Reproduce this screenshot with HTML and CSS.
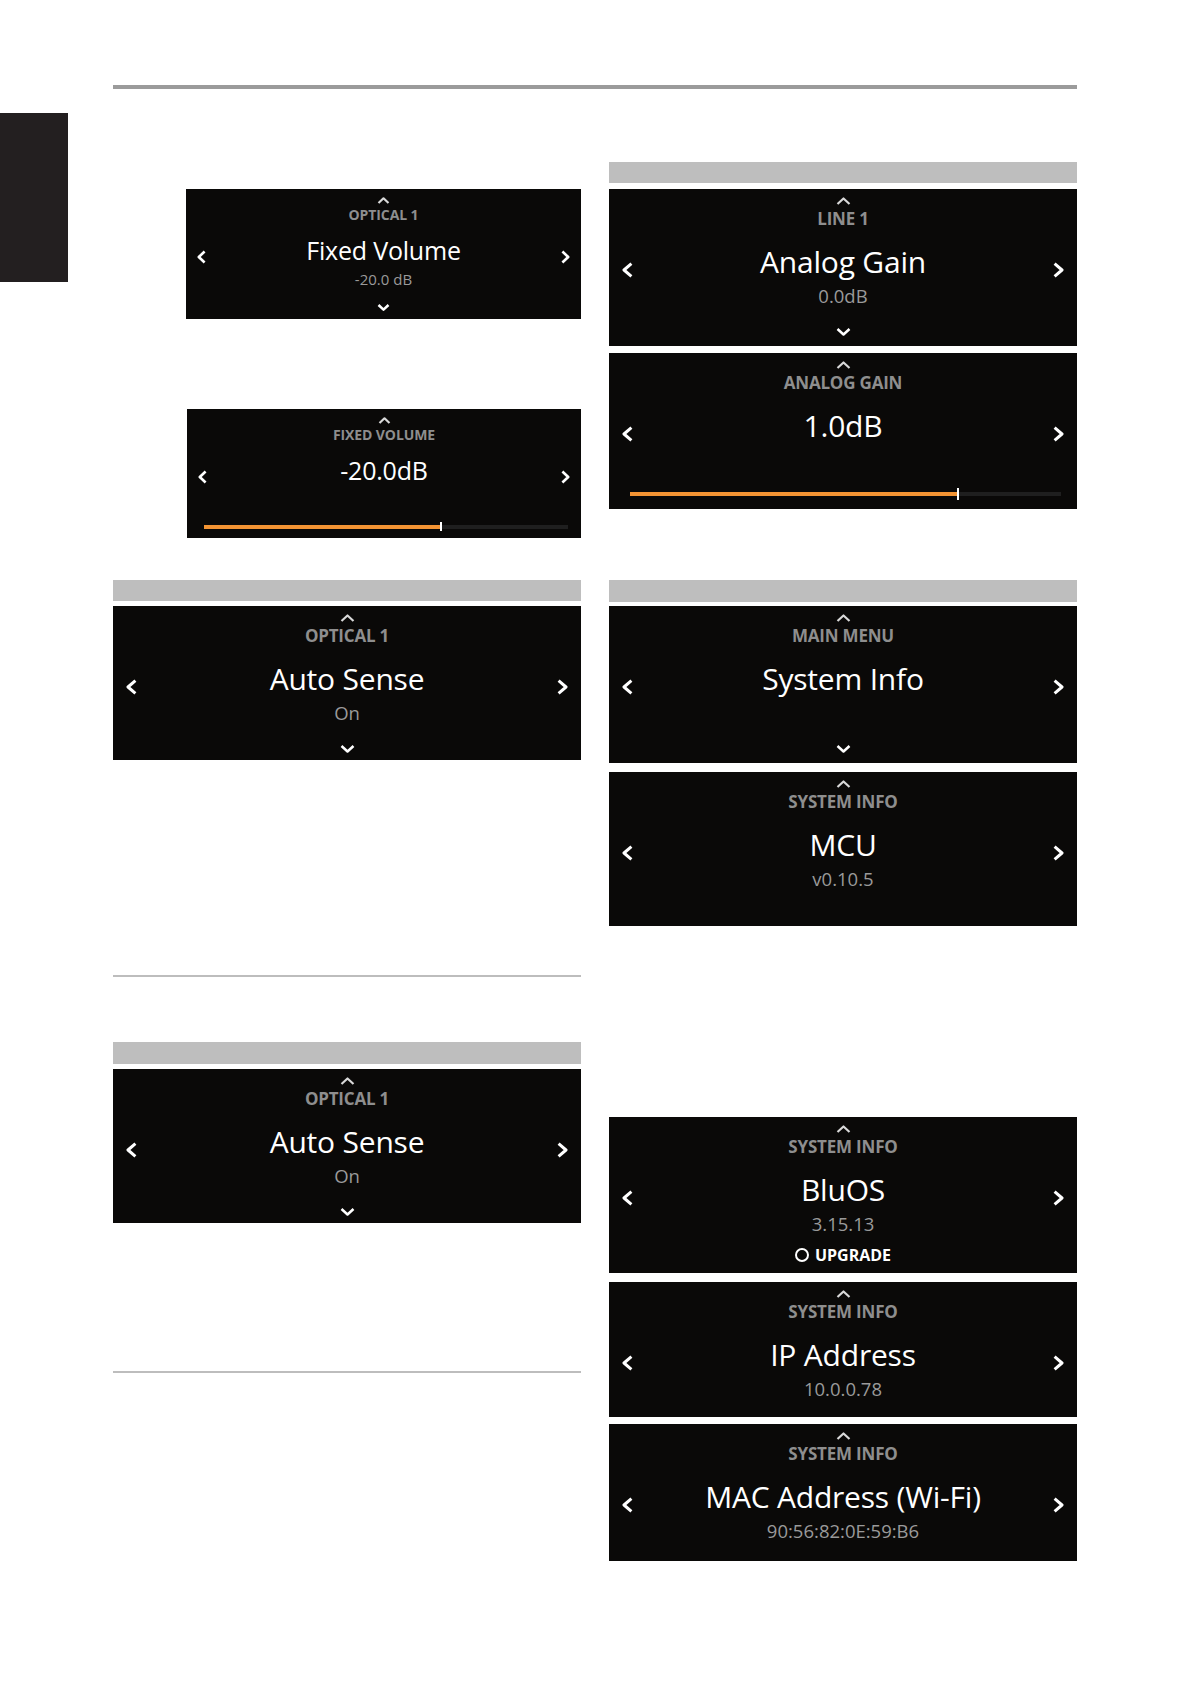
FILE: index.html
```html
<!DOCTYPE html>
<html lang="en">
<head>
<meta charset="utf-8">
<title>Settings screens</title>
<link rel="stylesheet" href="styles.css">
</head>
<body>
<div class="sheet">
  <aside class="gutter"><div class="tab"></div></aside>
  <main class="main">
    <div class="top-rule"></div>
    <div class="cols">
      <section class="col">
        <!-- Fixed Volume -->
        <div class="panel sm pa mt-100">
          <svg class="up" viewBox="0 0 13 7"><polyline points="1.5,6 6.5,1.3 11.5,6"/></svg>
          <div class="label">OPTICAL 1</div>
          <div class="row">
            <svg class="arr" viewBox="0 0 9 14"><polyline points="7.6,1.5 1.8,7 7.6,12.5"/></svg>
            <div class="title">Fixed Volume</div>
            <svg class="arr" viewBox="0 0 9 14"><polyline points="1.4,1.5 7.2,7 1.4,12.5"/></svg>
          </div>
          <div class="sub">-20.0 dB</div>
          <svg class="down" viewBox="0 0 13 7"><polyline points="1.5,1 6.5,5.7 11.5,1"/></svg>
        </div>

        <div class="panel sm pb mt-90">
          <svg class="up" viewBox="0 0 13 7"><polyline points="1.5,6 6.5,1.3 11.5,6"/></svg>
          <div class="label">FIXED VOLUME</div>
          <div class="row">
            <svg class="arr" viewBox="0 0 9 14"><polyline points="7.6,1.5 1.8,7 7.6,12.5"/></svg>
            <div class="title">-20.0dB</div>
            <svg class="arr" viewBox="0 0 9 14"><polyline points="1.4,1.5 7.2,7 1.4,12.5"/></svg>
          </div>
          <div class="slider">
            <div class="track"></div>
            <div class="fill" style="width:65%"></div>
            <div class="tick"></div>
          </div>
        </div>

        <div class="bar mt-42"></div>
        <div class="panel h154 mt-5">
          <svg class="up" viewBox="0 0 15 8"><polyline points="1.5,7 7.5,1.5 13.5,7"/></svg>
          <div class="label">OPTICAL 1</div>
          <div class="row">
            <svg class="arr" viewBox="0 0 11 16"><polyline points="9.4,1.6 2,8 9.4,14.4"/></svg>
            <div class="title">Auto Sense</div>
            <svg class="arr" viewBox="0 0 11 16"><polyline points="1.6,1.6 9,8 1.6,14.4"/></svg>
          </div>
          <div class="sub">On</div>
          <svg class="down" viewBox="0 0 15 8"><polyline points="1.5,1 7.5,6.5 13.5,1"/></svg>
        </div>

        <div class="rule mt-215"></div>

        <div class="bar tall mt-65"></div>
        <div class="panel h154 mt-5">
          <svg class="up" viewBox="0 0 15 8"><polyline points="1.5,7 7.5,1.5 13.5,7"/></svg>
          <div class="label">OPTICAL 1</div>
          <div class="row">
            <svg class="arr" viewBox="0 0 11 16"><polyline points="9.4,1.6 2,8 9.4,14.4"/></svg>
            <div class="title">Auto Sense</div>
            <svg class="arr" viewBox="0 0 11 16"><polyline points="1.6,1.6 9,8 1.6,14.4"/></svg>
          </div>
          <div class="sub">On</div>
          <svg class="down" viewBox="0 0 15 8"><polyline points="1.5,1 7.5,6.5 13.5,1"/></svg>
        </div>

        <div class="rule mt-148"></div>
      </section>

      <section class="col">
        <div class="bar mt-73"></div>
        <div class="panel h157 mt-6">
          <svg class="up" viewBox="0 0 15 8"><polyline points="1.5,7 7.5,1.5 13.5,7"/></svg>
          <div class="label">LINE 1</div>
          <div class="row">
            <svg class="arr" viewBox="0 0 11 16"><polyline points="9.4,1.6 2,8 9.4,14.4"/></svg>
            <div class="title">Analog Gain</div>
            <svg class="arr" viewBox="0 0 11 16"><polyline points="1.6,1.6 9,8 1.6,14.4"/></svg>
          </div>
          <div class="sub">0.0dB</div>
          <svg class="down" viewBox="0 0 15 8"><polyline points="1.5,1 7.5,6.5 13.5,1"/></svg>
        </div>

        <div class="panel h156 mt-7">
          <svg class="up" viewBox="0 0 15 8"><polyline points="1.5,7 7.5,1.5 13.5,7"/></svg>
          <div class="label">ANALOG GAIN</div>
          <div class="row">
            <svg class="arr" viewBox="0 0 11 16"><polyline points="9.4,1.6 2,8 9.4,14.4"/></svg>
            <div class="title">1.0dB</div>
            <svg class="arr" viewBox="0 0 11 16"><polyline points="1.6,1.6 9,8 1.6,14.4"/></svg>
          </div>
          <div class="slider">
            <div class="track"></div>
            <div class="fill" style="width:76%"></div>
            <div class="tick"></div>
          </div>
        </div>

        <div class="bar tall mt-71"></div>
        <div class="panel h157 mt-4">
          <svg class="up" viewBox="0 0 15 8"><polyline points="1.5,7 7.5,1.5 13.5,7"/></svg>
          <div class="label">MAIN MENU</div>
          <div class="row">
            <svg class="arr" viewBox="0 0 11 16"><polyline points="9.4,1.6 2,8 9.4,14.4"/></svg>
            <div class="title">System Info</div>
            <svg class="arr" viewBox="0 0 11 16"><polyline points="1.6,1.6 9,8 1.6,14.4"/></svg>
          </div>
          <div class="sub empty"></div>
          <svg class="down" viewBox="0 0 15 8"><polyline points="1.5,1 7.5,6.5 13.5,1"/></svg>
        </div>

        <div class="panel h154 mt-9">
          <svg class="up" viewBox="0 0 15 8"><polyline points="1.5,7 7.5,1.5 13.5,7"/></svg>
          <div class="label">SYSTEM INFO</div>
          <div class="row">
            <svg class="arr" viewBox="0 0 11 16"><polyline points="9.4,1.6 2,8 9.4,14.4"/></svg>
            <div class="title">MCU</div>
            <svg class="arr" viewBox="0 0 11 16"><polyline points="1.6,1.6 9,8 1.6,14.4"/></svg>
          </div>
          <div class="sub">v0.10.5</div>
        </div>

        <div class="panel h156 mt-191">
          <svg class="up" viewBox="0 0 15 8"><polyline points="1.5,7 7.5,1.5 13.5,7"/></svg>
          <div class="label">SYSTEM INFO</div>
          <div class="row">
            <svg class="arr" viewBox="0 0 11 16"><polyline points="9.4,1.6 2,8 9.4,14.4"/></svg>
            <div class="title">BluOS</div>
            <svg class="arr" viewBox="0 0 11 16"><polyline points="1.6,1.6 9,8 1.6,14.4"/></svg>
          </div>
          <div class="sub">3.15.13</div>
          <div class="upgrade"><span class="ring"></span>UPGRADE</div>
        </div>

        <div class="panel h135 mt-9">
          <svg class="up" viewBox="0 0 15 8"><polyline points="1.5,7 7.5,1.5 13.5,7"/></svg>
          <div class="label">SYSTEM INFO</div>
          <div class="row">
            <svg class="arr" viewBox="0 0 11 16"><polyline points="9.4,1.6 2,8 9.4,14.4"/></svg>
            <div class="title">IP Address</div>
            <svg class="arr" viewBox="0 0 11 16"><polyline points="1.6,1.6 9,8 1.6,14.4"/></svg>
          </div>
          <div class="sub">10.0.0.78</div>
        </div>

        <div class="panel h137 mt-7">
          <svg class="up" viewBox="0 0 15 8"><polyline points="1.5,7 7.5,1.5 13.5,7"/></svg>
          <div class="label">SYSTEM INFO</div>
          <div class="row">
            <svg class="arr" viewBox="0 0 11 16"><polyline points="9.4,1.6 2,8 9.4,14.4"/></svg>
            <div class="title">MAC Address (Wi-Fi)</div>
            <svg class="arr" viewBox="0 0 11 16"><polyline points="1.6,1.6 9,8 1.6,14.4"/></svg>
          </div>
          <div class="sub">90:56:82:0E:59:B6</div>
        </div>
      </section>
    </div>
  </main>
</div>
</body>
</html>
```

FILE: styles.css
```css
* { box-sizing: border-box; }

html, body {
  margin: 0;
  padding: 0;
  background: #ffffff;
}

body {
  font-family: "Open Sans", "Noto Sans", "DejaVu Sans", sans-serif;
  width: 1191px;
  min-height: 1684px;
}

.sheet {
  display: flex;
  align-items: flex-start;
}

.gutter {
  flex: 0 0 113px;
}

.tab {
  width: 68px;
  height: 169px;
  margin-top: 113px;
  background: #231f20;
}

.main {
  width: 964px;
  padding-top: 85px;
}

.top-rule {
  height: 4px;
  background: #9b9b9b;
}

.cols {
  display: flex;
  gap: 28px;
  align-items: flex-start;
}

.col {
  width: 468px;
  display: flex;
  flex-direction: column;
}

/* spacing */
.mt-4 { margin-top: 4px; }
.mt-5 { margin-top: 5px; }
.mt-6 { margin-top: 6px; }
.mt-7 { margin-top: 7px; }
.mt-9 { margin-top: 9px; }
.mt-42 { margin-top: 42px; }
.mt-65 { margin-top: 65px; }
.mt-71 { margin-top: 71px; }
.mt-73 { margin-top: 73px; }
.mt-90 { margin-top: 90px; }
.mt-100 { margin-top: 100px; }
.mt-148 { margin-top: 148px; }
.mt-191 { margin-top: 191px; }
.mt-215 { margin-top: 215px; }

.bar {
  height: 21px;
  background: #bebebe;
}
.bar.tall { height: 22px; }

.rule {
  height: 2px;
  background: #bdbdbd;
}

/* display panel */
.panel {
  background: #0a0908;
  display: flex;
  flex-direction: column;
  align-items: center;
  color: #fff;
}
.h135 { height: 135px; }
.h137 { height: 137px; }
.h154 { height: 154px; }
.h156 { height: 156px; }
.h157 { height: 157px; }

.panel svg polyline {
  fill: none;
  stroke-linejoin: round;
}

.up {
  width: 15px;
  height: 8px;
  margin-top: 8px;
}
.up polyline { stroke: #d9d9d9; stroke-width: 2.2; }

.down {
  width: 15px;
  height: 8px;
  margin-top: 20px;
}
.down polyline { stroke: #ffffff; stroke-width: 2.5; }

.label {
  margin-top: 4px;
  font-size: 17px;
  line-height: 20px;
  font-weight: 700;
  letter-spacing: -0.2px;
  color: #8e8e8e;
}

.row {
  align-self: stretch;
  margin-top: 15px;
  padding: 0 13px;
  display: grid;
  grid-template-columns: 1fr auto 1fr;
  align-items: start;
}

.title {
  font-size: 30px;
  line-height: 36px;
  letter-spacing: -0.2px;
  color: #ffffff;
  white-space: nowrap;
}

.arr {
  width: 11px;
  height: 16px;
  margin-top: 18px;
}
.arr:last-child { justify-self: end; }
.arr polyline { stroke: #ffffff; stroke-width: 3; }

.sub {
  margin-top: 4px;
  font-size: 18.5px;
  line-height: 24px;
  color: #9a9a9a;
}
.sub.empty { height: 24px; }

.upgrade {
  margin-top: 9px;
  display: flex;
  align-items: center;
  gap: 6px;
  font-size: 16px;
  line-height: 20px;
  font-weight: 700;
  color: #ffffff;
}
.ring {
  width: 14px;
  height: 14px;
  border: 2px solid #ffffff;
  border-radius: 50%;
}

.slider {
  position: relative;
  align-self: stretch;
  height: 12px;
  margin: 44px 16px 0 21px;
}
.slider .track {
  position: absolute;
  left: 0;
  right: 0;
  top: 4px;
  height: 4px;
  background: #1f1f1f;
}
.slider .fill {
  position: absolute;
  left: 0;
  top: 4px;
  height: 4px;
  background: #f39433;
}
.slider .tick {
  position: absolute;
  left: 76%;
  top: 0;
  width: 2px;
  height: 12px;
  margin-left: -1px;
  background: #ffffff;
}

/* small panels (fixed volume) */
.panel.sm .up {
  width: 13px;
  height: 7px;
  margin-top: 8px;
}
.panel.sm .label {
  margin-top: 3px;
  font-size: 14px;
  line-height: 16px;
  letter-spacing: -0.1px;
}
.panel.sm .row {
  margin-top: 12px;
  padding: 0 11px;
}
.panel.sm .title {
  font-size: 25px;
  line-height: 30px;
}
.panel.sm .arr {
  width: 9px;
  height: 14px;
  margin-top: 15px;
}
.panel.sm .arr polyline { stroke-width: 2.6; }
.panel.sm .sub {
  margin-top: 5px;
  font-size: 15px;
  line-height: 18px;
}
.panel.sm .down {
  width: 13px;
  height: 7px;
  margin-top: 16px;
}

.pa {
  margin-left: 73px;
  width: 395px;
  height: 130px;
}
.pb {
  margin-left: 74px;
  width: 394px;
  height: 129px;
}
.pb .row { margin-top: 14px; }
.pb .slider {
  height: 9px;
  margin: 37px 13px 0 17px;
}
.pb .slider .track,
.pb .slider .fill { top: 3px; }
.pb .slider .tick { left: 65%; height: 9px; }
```
